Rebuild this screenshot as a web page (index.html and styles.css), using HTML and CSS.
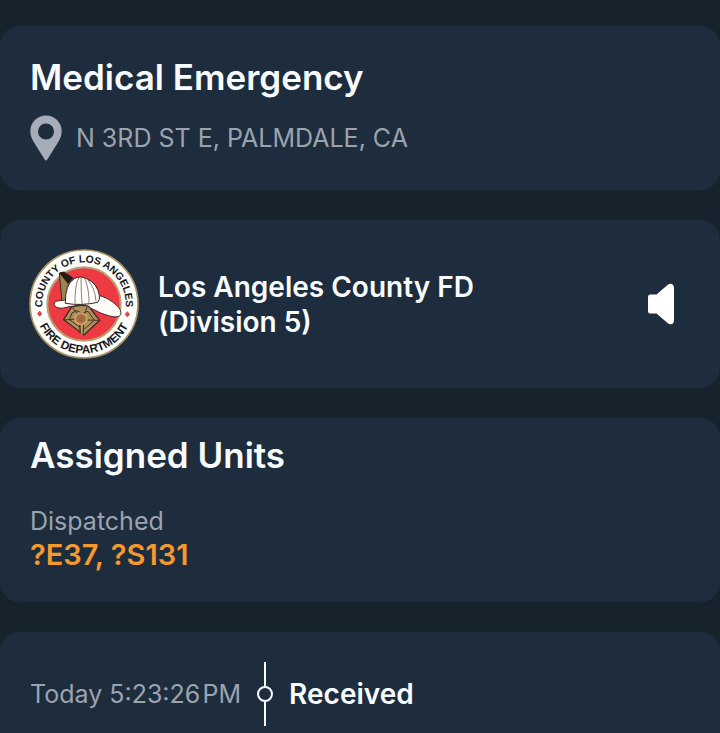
FILE: index.html
```html
<!DOCTYPE html>
<html lang="en">
<head>
<meta charset="utf-8">
<meta name="viewport" content="width=device-width, initial-scale=1">
<title>Medical Emergency</title>
<link rel="stylesheet" href="styles.css">
</head>
<body>
<main class="incident">
  <section class="card summary">
    <h1 class="title">Medical Emergency</h1>
    <p class="address">
      <svg class="pin" viewBox="0 0 32 46" aria-hidden="true"><path fill-rule="evenodd" d="M16 0.500C7.200 0.500 0.300 7.500 0.300 16.200C0.300 21 2.300 24.500 4.500 28.200L14.700 44.500Q16 46.500 17.300 44.500L27.500 28.200C29.700 24.500 31.700 21 31.700 16.200C31.700 7.500 24.800 0.500 16 0.500ZM16 8.500A8 8 0 1 1 16 24.500A8 8 0 0 1 16 8.500Z"/></svg>
      <span>N 3RD ST E, PALMDALE, CA</span>
    </p>
  </section>

  <section class="card agency">
    <svg class="seal" viewBox="28 27 330 330" role="img" aria-label="County of Los Angeles Fire Department">
      <defs>
        <path id="arc-top" d="M193 317A125 125 0 0 1 193 67A125 125 0 0 1 193 317"/>
        <path id="arc-bottom" d="M45 192A148 148 0 0 0 341 192"/>
      </defs>
      <circle cx="193" cy="192" r="162" fill="#fffefa" stroke="#a89365" stroke-width="5"/>
      <circle cx="193" cy="192" r="110" fill="#ee3b43" stroke="#b9a174" stroke-width="6"/>
      <g class="seal-text">
        <text class="seal-top" text-anchor="middle"><textPath href="#arc-top" startOffset="50%">COUNTY OF LOS ANGELES</textPath></text>
        <text class="seal-bottom" text-anchor="middle"><textPath href="#arc-bottom" startOffset="50%">FIRE DEPARTMENT</textPath></text>
      </g>
      <path d="M52 221L60 212L68 221L60 230ZM315 223L323 214L331 223L323 232Z" fill="#dc4650"/>
      <path d="M119 99L133 96L160 114L145 137L139 190L128 198Z" fill="#9c8450" stroke="#3a2a1d" stroke-width="3"/>
      <path d="M119 99L133 96L160 114L145 132L128 110Z" fill="#241a17"/>
      <path d="M103 193Q105 181 122 182L232 165Q264 171 291 196Q307 211 303 224Q298 235 270 228Q244 222 219 207Q173 190 132 204Q107 207 103 193Z" fill="#fffefa" stroke="#3f2924" stroke-width="3"/>
      <path d="M137 190Q136 132 164 116Q182 106 201 116Q233 130 239 166Q242 178 234 187Q186 198 137 190Z" fill="#fffefa" stroke="#35231f" stroke-width="3"/>
      <path d="M177 113Q165 139 166 190M184 112Q184 144 187 192M195 115Q209 148 208 190M204 119Q226 143 229 184" fill="none" stroke="#55443d" stroke-width="2"/>
      <path d="M155 202Q182 191 207 199L240 241L193 285L132 239Z" fill="#ae925d" stroke="#3e2b20" stroke-width="4"/>
      <path d="M160 205L175 224M202 202L193 224M134 240L168 237M238 241L202 240M182 281L180 252M157 219L170 212L188 220L205 214L224 241L192 269L149 239Z" fill="none" stroke="#49301f" stroke-width="3"/>
      <path d="M182 281L181 252L192 253L190 284" fill="#bd9e67" stroke="#422b20" stroke-width="3"/>
      <ellipse cx="184" cy="236" rx="18" ry="17" fill="#b27343" stroke="#d8ac74" stroke-width="4"/>
      <path d="M177 230H191M176 236H192M178 242H190" stroke="#815437" stroke-width="2"/>
    </svg>
    <h2 class="agency-name">Los Angeles County FD (Division 5)</h2>
    <button class="sound" type="button" aria-label="Play audio">
      <svg viewBox="0 0 28 42" aria-hidden="true"><path d="M3 11.500H9.500L20.500 2Q23 0 25 1Q27 2 27 5V37Q27 40 25 41Q23 42 20.500 40L9.500 30.500H3Q1 30.500 1 28V14Q1 11.500 3 11.500Z"/></svg>
    </button>
  </section>

  <section class="card units">
    <h2 class="title">Assigned Units</h2>
    <p class="status">Dispatched</p>
    <p class="unit-list">?E37, ?S131</p>
  </section>

  <section class="card timeline">
    <time class="time">Today 5:23:26&#8202;PM</time>
    <svg class="marker" viewBox="0 0 18 64" aria-hidden="true"><path d="M9 0V25M9 39V64"/><circle cx="9" cy="32" r="7"/></svg>
    <strong class="event">Received</strong>
  </section>
</main>
</body>
</html>
```
FILE: styles.css
```css
* {
  box-sizing: border-box;
}

body {
  margin: 0;
  background: #16232d;
  color: #f8fbff;
  font-family: Inter, "Liberation Sans", sans-serif;
}

h1, h2, p {
  margin: 0;
}

.incident {
  display: flex;
  flex-direction: column;
  gap: 30px;
  padding-top: 26px;
}

.card {
  padding: 30px;
  border-radius: 20px;
  background: #1e2d3d;
}

.title {
  font-size: 35px;
  font-weight: 600;
  line-height: 42px;
}

.address {
  display: flex;
  align-items: center;
  gap: 14px;
  margin-top: 17px;
  color: #9ba3af;
  font-size: 25px;
  line-height: 46px;
}

.summary {
  padding-bottom: 29px;
}

.pin {
  flex: none;
  width: 32px;
  height: 46px;
  fill: #a7adb8;
}

.agency {
  display: flex;
  align-items: center;
  padding: 29px;
}

.seal {
  flex: none;
  width: 110px;
  height: 110px;
}

.seal-text {
  fill: #15151c;
  font-family: "Liberation Sans", sans-serif;
  font-weight: 700;
}

.seal-top {
  font-size: 31px;
}

.seal-bottom {
  font-size: 35px;
}

.agency-name {
  flex: 1;
  max-width: 350px;
  margin-left: 19px;
  padding-top: 2px;
  font-size: 28px;
  font-weight: 600;
  line-height: 35px;
}

.sound {
  width: 60px;
  height: 60px;
  margin-left: auto;
  padding: 0;
  border: 0;
  background: none;
}

.sound svg {
  display: block;
  width: 28px;
  height: 42px;
  margin: auto;
  fill: #ffffff;
}

.units {
  padding-top: 16px;
}

.status {
  margin-top: 28px;
  color: #9ba3af;
  font-size: 25px;
  line-height: 34px;
}

.unit-list {
  color: #f7982c;
  font-size: 29px;
  font-weight: 600;
  line-height: 34px;
}

.timeline {
  display: flex;
  align-items: center;
  padding-bottom: 8px;
  border-radius: 20px 20px 0 0;
}

.time {
  color: #9ba3af;
  font-size: 25px;
}

.marker {
  flex: none;
  width: 18px;
  height: 64px;
  margin: 0 15px;
  fill: none;
  stroke: #f8fbff;
  stroke-width: 2;
}

.event {
  font-size: 28px;
  font-weight: 600;
}
```
